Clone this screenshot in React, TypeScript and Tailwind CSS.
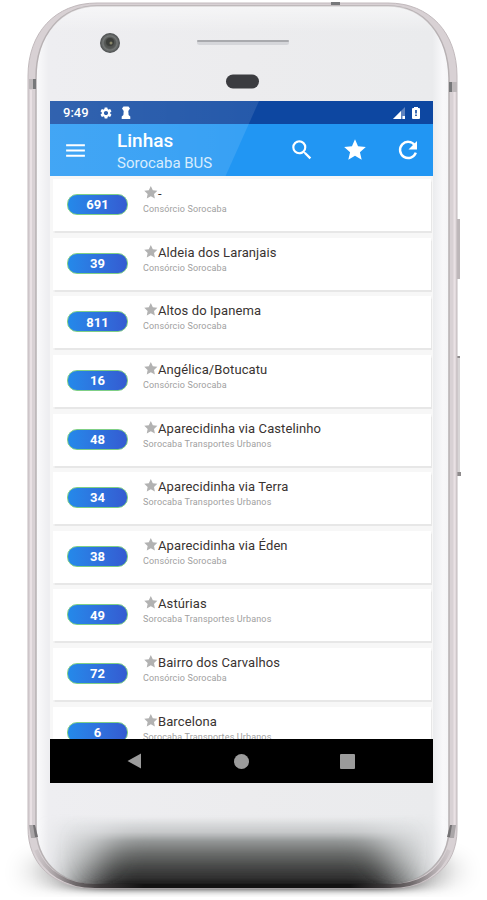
import React from "react";
import {
  MdMenu,
  MdSearch,
  MdStar,
  MdSettings,
} from "react-icons/md";

type Line = {
  id: string;
  number: string;
  name: string;
  company: string;
};

const LINES: Line[] = [
  { id: "1", number: "691", name: "-", company: "Consórcio Sorocaba" },
  { id: "2", number: "39", name: "Aldeia dos Laranjais", company: "Consórcio Sorocaba" },
  { id: "3", number: "811", name: "Altos do Ipanema", company: "Consórcio Sorocaba" },
  { id: "4", number: "16", name: "Angélica/Botucatu", company: "Consórcio Sorocaba" },
  { id: "5", number: "48", name: "Aparecidinha via Castelinho", company: "Sorocaba Transportes Urbanos" },
  { id: "6", number: "34", name: "Aparecidinha via Terra", company: "Sorocaba Transportes Urbanos" },
  { id: "7", number: "38", name: "Aparecidinha via Éden", company: "Consórcio Sorocaba" },
  { id: "8", number: "49", name: "Astúrias", company: "Sorocaba Transportes Urbanos" },
  { id: "9", number: "72", name: "Bairro dos Carvalhos", company: "Consórcio Sorocaba" },
  { id: "10", number: "6", name: "Barcelona", company: "Sorocaba Transportes Urbanos" },
];

const BODY =
  "M97 3 H388 C430 3 457 33 457 76 V830 C457 866 430 888 392 888 H93 C53 888 28 864 28 828 V76 C28 33 55 3 97 3 Z";
const FACE =
  "M97 6 H388 C424 6 448 35 449 78 V828 C449 860 424 884 390 884 H95 C59 884 36 860 36 826 V78 C36 35 61 6 97 6 Z";

// Phone body behind the screen
const Phone = () => (
  <svg className="absolute inset-0 h-[900px] w-[487px]" viewBox="0 0 487 900">
    <defs>
      <linearGradient id="face" x1="0" y1="0" x2="1" y2="0">
        <stop offset="0" stopColor="#fbfbfc" />
        <stop offset="0.03" stopColor="#eeeef1" />
        <stop offset="0.5" stopColor="#ececee" />
        <stop offset="0.96" stopColor="#eaebed" />
        <stop offset="0.985" stopColor="#f8f8fa" />
        <stop offset="1" stopColor="#f6f6f8" />
      </linearGradient>
      <linearGradient id="shine" x1="0" y1="0" x2="0" y2="1">
        <stop offset="0" stopColor="#fff" stopOpacity="0.5" />
        <stop offset="0.03" stopColor="#fff" stopOpacity="0" />
      </linearGradient>
      <linearGradient id="dark" gradientUnits="userSpaceOnUse" x1="0" y1="818" x2="0" y2="888">
        <stop offset="0" stopColor="#c9ccce" stopOpacity="0" />
        <stop offset="0.2" stopColor="#c5c7c8" stopOpacity="0.9" />
        <stop offset="0.33" stopColor="#949797" />
        <stop offset="0.5" stopColor="#6c6e6d" />
        <stop offset="0.68" stopColor="#4a4c4b" />
        <stop offset="0.85" stopColor="#303030" />
        <stop offset="1" stopColor="#101010" />
      </linearGradient>
      <linearGradient id="haze" gradientUnits="userSpaceOnUse" x1="0" y1="815" x2="0" y2="880">
        <stop offset="0" stopColor="#c2c5c6" stopOpacity="0" />
        <stop offset="0.4" stopColor="#c4c7c8" stopOpacity="0.6" />
        <stop offset="1" stopColor="#a9acac" stopOpacity="0.9" />
      </linearGradient>
      <linearGradient id="rim" gradientUnits="userSpaceOnUse" x1="28" y1="0" x2="457" y2="0">
        <stop offset="0" stopColor="#aaa2a5" stopOpacity="0" />
        <stop offset="0.1" stopColor="#777173" />
        <stop offset="0.17" stopColor="#3b3839" />
        <stop offset="0.27" stopColor="#121212" />
        <stop offset="0.75" stopColor="#121212" />
        <stop offset="0.83" stopColor="#3b3839" />
        <stop offset="0.9" stopColor="#777173" />
        <stop offset="1" stopColor="#aaa2a5" stopOpacity="0" />
      </linearGradient>
      <radialGradient id="lens">
        <stop offset="0" stopColor="#8a8873" />
        <stop offset="0.25" stopColor="#4b4d49" />
        <stop offset="0.55" stopColor="#555856" />
        <stop offset="0.7" stopColor="#747776" />
        <stop offset="1" stopColor="#484b4c" />
      </radialGradient>
      <filter id="spread" x="-40%" y="-10%" width="180%" height="120%">
        <feGaussianBlur stdDeviation="19 0.5" />
      </filter>
      <filter id="soft" x="-40%" y="-10%" width="180%" height="120%">
        <feGaussianBlur stdDeviation="12 1" />
      </filter>
      <filter id="ground" x="-30%" y="-100%" width="160%" height="300%">
        <feGaussianBlur stdDeviation="20 3.5" />
      </filter>
      <filter id="ambient" x="-30%" y="-100%" width="160%" height="300%">
        <feGaussianBlur stdDeviation="16 9" />
      </filter>
      <clipPath id="faceClip">
        <path d={FACE} />
      </clipPath>
      <clipPath id="groundClip">
        <path d="M0 800 H487 V897 H0 Z" />
      </clipPath>
    </defs>

    <g clipPath="url(#groundClip)">
      <path d="M78 850 H410 V889 H78 Z" fill="#000" opacity="0.8" filter="url(#ground)" />
      <path d="M38 856 H448 L452 884 H34 Z" fill="#000" opacity="0.22" filter="url(#ambient)" />
    </g>

    <rect x="456" y="219" width="4" height="60" fill="#bdb7b9" />
    <rect x="456" y="356" width="4" height="120" rx="1" fill="#d8d5d6" />
    <path d="M457 356 h3 v2 h-3 Z M457 472 h4 v4 h-4 Z" fill="#8e8b8c" />

    <path d={BODY} fill="#d8d1d4" />
    <path d="M31 90 V826 M454.5 90 V826" stroke="#e9e1e4" strokeWidth="2" />
    <path d={FACE} fill="url(#face)" stroke="#b7b1b3" strokeWidth="1.5" />
    <path d={FACE} fill="url(#shine)" />
    <path d={BODY} fill="none" stroke="#c2babd" strokeWidth="1" />
    <path d="M29 79 h7 v10 h-7 Z M449 82 h8 v10 h-8 Z" fill="#bcb7b9" />
    <path d="M33 79 h3 v10 h-3 Z M449 82 h3 v10 h-3 Z" fill="#77787a" />
    <path d="M331 2 h9 v3 h-9 Z" fill="#77787a" />

    <g clipPath="url(#faceClip)">
      <rect x="62" y="812" width="362" height="84" fill="url(#haze)" filter="url(#soft)" />
      <path
        d="M112 812 H376 L398 896 H88 Z"
        fill="url(#dark)"
        filter="url(#spread)"
      />
    </g>
    <path
      d="M36 850 C45 872 66 886 95 886 H390 C421 886 440 872 449 850"
      fill="none"
      stroke="url(#rim)"
      strokeWidth="4"
    />
    <path d="M29 825 h6 l2 13 h-6 Z M456 825 h-6 l-2 13 h6 Z" fill="#aaa6a8" />
    <path d="M33 825 h2 l3 12 h-3 Z M452 825 h-2 l-3 12 h3 Z" fill="#747274" />

    <circle cx="110" cy="43" r="10" fill="url(#lens)" />
    <circle cx="110" cy="42" r="4" fill="#3c3e3b" />
    <circle cx="111" cy="43" r="1.5" fill="#88866a" />
    <rect x="197" y="40" width="92" height="5" rx="2.5" fill="#d5d6da" />
    <rect x="197" y="40" width="92" height="2" rx="1" fill="#a9aaae" />
    <rect x="226" y="74.500" width="33" height="14" rx="7" fill="#3b3c40" />
  </svg>
);

const StatusBar = () => (
  <div className="flex h-[23px] shrink-0 items-center bg-[#0d47a1] px-[13px] text-white">
    <span className="w-[36px] text-[13px] leading-none font-medium">9:49</span>
    <MdSettings className="h-[14px] w-[14px]" />
    <svg className="ml-[8px] h-[13px] w-[10px]" viewBox="0 0 10 13" fill="currentColor">
      <path d="M2.500 0.500 H7.500 L9 2.500 L7.300 5 L7.600 9 L9.300 10.500 V13 H0.700 V10.500 L2.400 9 L2.700 5 L1 2.500 Z" />
    </svg>
    <svg className="ml-auto h-3 w-3" viewBox="0 0 12 12">
      <path d="M12 0 V12 H0 Z" fill="#5f83bf" />
      <path d="M8 4 V12 H0 Z M9.500 9 h2.500 v3 h-2.500 Z" fill="#fff" />
    </svg>
    <svg className="ml-[7px] h-3 w-2" viewBox="0 0 8 12">
      <path d="M2 0 h4 v1 h1 q1 0 1 1 v9 q0 1 -1 1 h-6 q-1 0 -1 -1 v-9 q0 -1 1 -1 h1 Z" fill="#fff" />
      <path d="M3.200 3 h1.600 v3.500 h-1.600 Z M3.200 7.500 h1.600 v1.500 h-1.600 Z" fill="#0d47a1" />
    </svg>
  </div>
);

const AppBar = () => (
  <div className="flex h-[52px] shrink-0 items-center bg-[#2196f3] pr-[12px] pl-[13px] text-white">
    <MdMenu className="h-[25px] w-[25px]" />
    <div className="ml-[29px] pt-[3px]">
      <h1 className="text-[19px] leading-[23px] font-medium">Linhas</h1>
      <h2 className="text-[15px] leading-[22px] text-[#d3eafd]">Sorocaba BUS</h2>
    </div>
    <div className="ml-auto flex gap-[27px]">
      <MdSearch className="h-[26px] w-[26px]" />
      <MdStar className="h-[26px] w-[26px]" />
      <svg className="h-[26px] w-[26px]" viewBox="0 0 26 26">
        <path d="M19.800 8.300 A8.100 8.100 0 1 0 20.800 15.600" fill="none" stroke="currentColor" strokeWidth="2.400" />
        <path d="M22 4 V12.500 H13.500 Z" fill="currentColor" />
      </svg>
    </div>
  </div>
);

const App = () => {
  return (
    <main className="relative h-[900px] w-[487px] overflow-hidden bg-white pt-[101px] pl-[50px] font-[Roboto,sans-serif]">
      <Phone />
      <div className="relative flex h-[682px] w-[383px] flex-col overflow-hidden bg-[#f7f7f7]">
        <StatusBar />
        <AppBar />
        <div className="flex min-h-0 flex-1 flex-col gap-[6.650px] overflow-hidden pt-[3px] pr-[2px] pl-[3px]">
          {LINES.map((line) => (
            <div
              key={line.id}
              className="flex h-[52px] shrink-0 bg-white pl-[14px] shadow-[0_1px_1px_0.500px_#e7e7e7]"
            >
              <div className="mt-[15px] flex h-[21px] w-[61px] items-center justify-center rounded-[10px] border border-[#7fcf86] bg-linear-to-r from-[#2489ea] to-[#345bd1] pt-px text-[13px] font-bold text-white">
                {line.number}
              </div>
              <div className="ml-[15px] pt-[6px]">
                <div className="flex h-[17px] items-center text-[13px] leading-[17px] tracking-[0.100px] text-[#393331]">
                  <svg className="-mt-[2px] h-[15px] w-[15px]" viewBox="0 0 24 24" fill="#b2b2b2">
                    <path d="M12.500 1.500 L15.700 8.300 L23 9.200 L17.600 14.200 L19 21.500 L12.500 18 L6 21.500 L7.400 14.200 L2 9.200 L9.300 8.300 Z" />
                  </svg>
                  {line.name}
                </div>
                <p className="text-[9px] leading-[15px] tracking-[0.150px] text-[#a0a0a0]">{line.company}</p>
              </div>
            </div>
          ))}
        </div>
        <div className="flex h-[44px] shrink-0 items-center bg-black pl-[77px] text-[#9b9b9b]">
          <svg className="h-4 w-[15px]" viewBox="0 0 15 16" fill="currentColor">
            <path d="M14 0.500 V15.500 L0.500 8 Z" />
          </svg>
          <div className="ml-[92px] h-[15px] w-[15px] rounded-full bg-[#9b9b9b]" />
          <div className="ml-[91px] h-[15px] w-[15px] rounded-[1px] bg-[#9b9b9b]" />
        </div>
        {/* glass reflection */}
        <div className="pointer-events-none absolute top-0 left-0 h-[75px] w-[209px] bg-linear-to-r from-white/15 to-white/10 [clip-path:polygon(0_0,100%_0,84%_100%,0_100%)]" />
      </div>
    </main>
  );
};

export default App;
